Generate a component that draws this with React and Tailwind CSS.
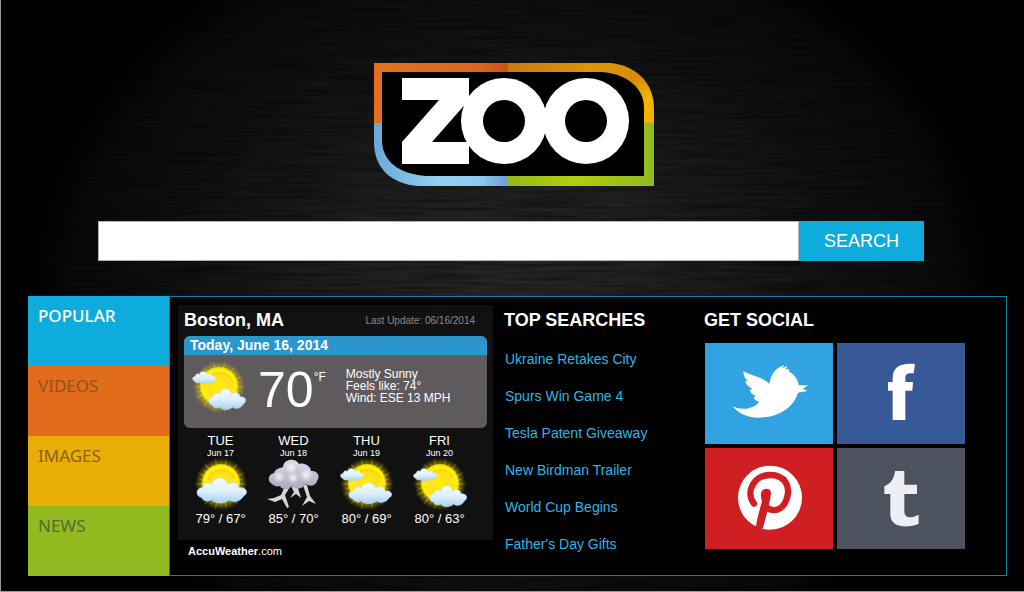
import React from "react";

const tabs = [
  { label: "POPULAR", color: "bg-[#0eacdc] text-white font-medium" },
  { label: "VIDEOS", color: "bg-[#e06c1c] text-[#91531b]" },
  { label: "IMAGES", color: "bg-[#e8ae06] text-[#925c20]" },
  { label: "NEWS", color: "bg-[#92b91f] text-[#596836]" },
];

const searches = [
  "Ukraine Retakes City",
  "Spurs Win Game 4",
  "Tesla Patent Giveaway",
  "New Birdman Trailer",
  "World Cup Begins",
  "Father's Day Gifts",
];

const forecast = [
  { day: "TUE", date: "Jun 17", temps: "79° / 67°", icon: "cloudy" },
  { day: "WED", date: "Jun 18", temps: "85° / 70°", icon: "storm" },
  { day: "THU", date: "Jun 19", temps: "80° / 69°", icon: "partly" },
  { day: "FRI", date: "Jun 20", temps: "80° / 63°", icon: "sunny" },
];

const rays = Array.from({ length: 28 }, (_, i) => {
  const a = (i * Math.PI * 2) / 28;
  const w = 0.08;
  const r = i % 2 ? 23 : 27;
  const p = (ang, rad) => `${(27 + Math.cos(ang) * rad).toFixed(2)} ${(26 + Math.sin(ang) * rad).toFixed(2)}`;
  return `M${p(a - w, 16)}L${p(a, r)}L${p(a + w, 16)}Z`;
}).join("");

const cloudPath = "M5 17C-1 16 0 9 6 9C7 4 12 4 14 6C16-1 27-1 29 6C33 3 39 5 39 9C45 8 49 13 43 16C41 20 34 22 30 19C25 23 17 22 14 19C11 21 7 20 5 17Z";

const Backdrop = () => (
  <svg aria-hidden="true" className="absolute inset-0 w-full h-full" preserveAspectRatio="none">
    <defs>
      <radialGradient id="glow" cx="50%" cy="50%" r="50%">
        <stop offset="0" stopColor="#272727" />
        <stop offset="0.35" stopColor="#1e1e1e" />
        <stop offset="0.7" stopColor="#101010" />
        <stop offset="0.92" stopColor="#090909" />
        <stop offset="1" stopColor="#000" />
      </radialGradient>
      <filter id="brushed" x="0" y="0" width="100%" height="100%">
        <feTurbulence type="fractalNoise" baseFrequency="0.012 0.3" numOctaves="3" seed="4" />
        <feColorMatrix values="0 0 0 0 0  0 0 0 0 0  0 0 0 0 0  0.9 0 0 0 -0.32" />
      </filter>
    </defs>
    <ellipse cx="50%" cy="50%" rx="47%" ry="66%" fill="url(#glow)" />
    <rect width="100%" height="100%" filter="url(#brushed)" />
  </svg>
);

const Logo = () => (
  <svg role="img" aria-label="Zoo" width="280" height="123" viewBox="0 0 280 123">
    <defs>
      <linearGradient id="orange"><stop offset="0" stopColor="#e4701f" /><stop offset="0.75" stopColor="#df661c" /><stop offset="1" stopColor="#cb5217" /></linearGradient>
      <linearGradient id="gold" x2="1" y2="0.5"><stop offset="0" stopColor="#c67a10" /><stop offset="0.5" stopColor="#dd9606" /><stop offset="0.8" stopColor="#d88a0a" /><stop offset="1" stopColor="#f0b400" /></linearGradient>
      <linearGradient id="blue"><stop offset="0" stopColor="#6ba8d8" /><stop offset="0.5" stopColor="#94d2f2" /><stop offset="0.8" stopColor="#8cc8ee" /><stop offset="1" stopColor="#6c9fd2" /></linearGradient>
      <linearGradient id="green"><stop offset="0" stopColor="#96b91c" /><stop offset="0.45" stopColor="#b0cf12" /><stop offset="1" stopColor="#92b922" /></linearGradient>
      <clipPath id="badge"><path d="M0 0H236C260 2 280 18 280 46V123H44C18 121 0 106 0 79Z" /></clipPath>
    </defs>
    <g clipPath="url(#badge)">
      <rect width="134" height="60" fill="url(#orange)" />
      <rect x="134" width="146" height="60" fill="url(#gold)" />
      <rect y="60" width="134" height="63" fill="url(#blue)" />
      <rect x="134" y="60" width="146" height="63" fill="url(#green)" />
    </g>
    <path d="M8 9H228C252 11 270 24 270 45V113H52C26 111 8 99 8 77Z" />
    <path d="M28 15H95V37L58 79H95V101H28V79L65 37H28Z" fill="#fff" />
    <circle cx="130" cy="58" r="43" fill="#fff" />
    <circle cx="212" cy="58" r="43" fill="#fff" />
    <circle cx="130" cy="58" r="21" />
    <circle cx="212" cy="58" r="21" />
  </svg>
);

const Cloud = ({ x, y, sx, sy }) => (
  <path d={cloudPath} fill="url(#cloud)" stroke="#b5d8f0" strokeWidth="0.6" transform={`translate(${x} ${y}) scale(${sx} ${sy})`} />
);

const WeatherIcon = ({ kind }) => {
  if (kind === "storm") {
    return (
      <svg aria-hidden="true" width="54" height="52" viewBox="0 0 54 52">
        <path d="M18 28L14 37L7 40L0 41L8 44L15 41L20 50L22 49L18 37L23 29M24 28L27 34L23 40L29 36L34 40L31 30M36 27L40 39L35 48L42 43L49 46L43 38L40 27" fill="#d4d4dc" />
        <path d="M5 26C0 23 1 16 7 15C9 10 14 10 16 9C17 0 29 0 32 6C38 4 44 9 44 13C50 12 54 18 50 23C49 28 42 29 39 26C35 32 28 31 25 28C20 33 14 31 13 28C10 29 7 28 5 26Z" fill="url(#stormCloud)" />
        <circle cx="24" cy="10" r="6" fill="url(#puff)" />
        <circle cx="12" cy="19" r="6" fill="url(#puff)" />
        <circle cx="39" cy="17" r="7" fill="url(#puff)" />
        <circle cx="26" cy="20" r="6" fill="url(#puff)" />
      </svg>
    );
  }
  return (
    <svg aria-hidden="true" width="54" height="52" viewBox="0 0 54 52">
      <circle cx="27" cy="26" r="26" fill="url(#halo)" />
      <path d={rays} fill="#f0dc10" fillOpacity="0.4" />
      <circle cx="27" cy="25" r="19" fill="url(#sun)" />
      <path d="M14 22A14 14 0 0 1 40 20" fill="none" stroke="#ffb900" strokeOpacity="0.5" strokeWidth="2" />
      {kind === "cloudy" && <Cloud x={2} y={19} sx={1.1} sy={1.2} />}
      {kind === "partly" && <Cloud x={8} y={24} sx={0.95} sy={1} />}
      {kind === "sunny" && <Cloud x={16} y={27} sx={0.82} sy={1} />}
      {kind !== "cloudy" && <Cloud x={0} y={10} sx={0.52} sy={0.6} />}
    </svg>
  );
};

const WeatherDefs = () => (
  <svg aria-hidden="true" width="0" height="0" className="absolute">
    <defs>
      <radialGradient id="halo"><stop offset="0.6" stopColor="#f0dc00" stopOpacity="0.75" /><stop offset="1" stopColor="#e8d000" stopOpacity="0" /></radialGradient>
      <radialGradient id="sun"><stop offset="0" stopColor="#fff000" /><stop offset="0.55" stopColor="#ffe020" /><stop offset="0.9" stopColor="#fff200" /><stop offset="1" stopColor="#fff200" stopOpacity="0.6" /></radialGradient>
      <radialGradient id="puff"><stop offset="0" stopColor="#fff" stopOpacity="0.8" /><stop offset="1" stopColor="#fff" stopOpacity="0" /></radialGradient>
      <linearGradient id="cloud" x2="0" y2="1"><stop offset="0" stopColor="#f4faff" /><stop offset="0.5" stopColor="#e2f1fb" /><stop offset="1" stopColor="#a4d2f2" /></linearGradient>
      <linearGradient id="stormCloud" x2="0" y2="1"><stop offset="0" stopColor="#dcdce6" /><stop offset="1" stopColor="#a8a8ba" /></linearGradient>
    </defs>
  </svg>
);

const Weather = () => (
  <section className="w-[315px] shrink-0 mt-2">
    <WeatherDefs />
    <div className="bg-[#111111] px-1.5 h-[235px]">
      <div className="flex items-center justify-between pr-3 h-[31px]">
        <h2 className="text-[18px] font-bold">Boston, MA</h2>
        <p className="text-[10px] text-[#8a8a8a]">Last Update: 06/16/2014</p>
      </div>
      <div className="rounded-md overflow-hidden bg-[#5f5a5c]">
        <h3 className="bg-[#2996cc] px-1.5 h-[19px] leading-[19px] text-[14px] font-bold">Today, June 16, 2014</h3>
        <div className="flex h-[73px] pl-2">
          <div className="pt-1.5"><WeatherIcon kind="sunny" /></div>
          <p className="flex items-start pl-3 pt-2">
            <span className="text-[50px] leading-[54px]">70</span>
            <span className="text-[12px] leading-[28px]">°F</span>
          </p>
          <p className="pl-5 pt-[13px] text-[12px] leading-3">
            Mostly Sunny<br />Feels like: 74°<br />Wind: ESE 13 MPH
          </p>
        </div>
      </div>
      <ul className="flex pt-1.5">
        {forecast.map((f) => (
          <li key={f.day} className="w-[73px] flex flex-col items-center">
            <span className="text-[13px] leading-[14px]">{f.day}</span>
            <span className="text-[9px] leading-[10px]">{f.date}</span>
            <WeatherIcon kind={f.icon} />
            <span className="text-[13px] leading-[18px]">{f.temps}</span>
          </li>
        ))}
      </ul>
    </div>
    <p className="pl-2.5 pt-1 text-[11px] leading-[14px]"><b>AccuWeather</b>.com</p>
  </section>
);

const icons = {
  Twitter: (
    <path
      fill="#fff"
      transform="translate(20 15) scale(0.3333)"
      d="M22 145C48 174 82 182 116 178C168 174 208 143 219 104L247 99L234 92L249 82L222 82C217 61 207 48 193 42L192 32L182 35L187 24L172 31L178 22C153 28 137 49 133 78C113 57 84 55 55 40C55 52 60 62 68 69L61 70C64 82 72 89 83 92L74 95C77 105 83 110 92 113L86 118C89 126 94 129 103 131C86 151 54 160 22 145Z"
    />
  ),
  Facebook: (
    <path
      fill="#fff"
      transform="translate(43 15) scale(0.3333)"
      d="M38 186V98H24V72H38V60C38 30 58 14 105 18L101 46C84 44 76 47 76 60V72H99L97 98H76V186Z"
    />
  ),
  Pinterest: (
    <g transform="translate(25 12) scale(0.3333)">
      <circle cx="120" cy="113" r="96" fill="#fff" />
      <path fill="none" stroke="#d01f22" strokeWidth="19" strokeLinecap="round" d="M72 131C44 93 74 45 121 45C166 45 180 80 172 110C163 148 134 158 112 144" />
      <path fill="#d01f22" d="M93 100C96 82 123 82 123 99C122 118 109 168 98 206L77 204C82 172 89 148 96 124C93 116 92 108 93 100Z" />
    </g>
  ),
  Tumblr: (
    <path
      fill="#edeff4"
      transform="translate(-142 -152) scale(0.3333)"
      d="M600 525H628V566H666V594H628V645C628 668 648 668 671 656V683C640 697 586 697 586 655V594H568V571C586 564 598 548 600 525Z"
    />
  ),
};

const socials = [
  { name: "Twitter", color: "bg-[#30a3e0]" },
  { name: "Facebook", color: "bg-[#385997]" },
  { name: "Pinterest", color: "bg-[#d01f22]" },
  { name: "Tumblr", color: "bg-[#4c525e]" },
];

export default function App() {
  return (
    <main className="relative min-h-screen flex flex-col bg-black text-white border-l border-b border-[#9a9a9a] font-['Liberation_Sans',Arial,sans-serif]">
      <Backdrop />
      <header className="relative pt-[63px] flex justify-center pl-0.5">
        <Logo />
      </header>
      <form className="relative flex mt-[35px] ml-[97px] mr-[100px] h-10" onSubmit={(e) => e.preventDefault()}>
        <input type="text" aria-label="Search the web" className="flex-1 min-w-0 bg-white border border-[#b4b4b4] px-3 text-black text-lg outline-none" />
        <button type="submit" className="w-[125px] bg-[#0eacdc] text-[18px]">SEARCH</button>
      </form>
      <div className="relative flex mt-[35px] ml-[27px] mr-[17px] h-[280px] bg-black border border-[#0a83a8]">
        <nav className="w-[142px] -my-px -ml-px shrink-0 grid grid-rows-4 border-r border-[#0a83a8] font-['Noto_Sans',sans-serif]">
          {tabs.map((t) => (
            <button key={t.label} type="button" className={`flex items-start px-2.5 pt-2 text-[17px] leading-6 ${t.color}`}>
              {t.label}
            </button>
          ))}
        </nav>
        <div className="flex pl-2">
          <Weather />
          <section className="w-[200px] pl-[11px] pt-3">
            <h2 className="text-[18px] leading-[22px] font-bold">TOP SEARCHES</h2>
            <ul className="pt-2.5 pl-px">
              {searches.map((s) => (
                <li key={s} className="h-[37px] flex items-center">
                  <a href="#" className="text-[14px] text-[#2cb6e6]">{s}</a>
                </li>
              ))}
            </ul>
          </section>
          <section className="pl-[11px] pt-3">
            <h2 className="text-[18px] leading-[22px] font-bold">GET SOCIAL</h2>
            <div className="grid grid-cols-2 gap-1 pt-3 pl-px">
              {socials.map((s) => (
                <a key={s.name} href="#" aria-label={s.name} className={`w-32 h-[101px] ${s.color}`}>
                  <svg aria-hidden="true" width="128" height="101" viewBox="0 0 128 101">{icons[s.name]}</svg>
                </a>
              ))}
            </div>
          </section>
        </div>
      </div>
    </main>
  );
}
